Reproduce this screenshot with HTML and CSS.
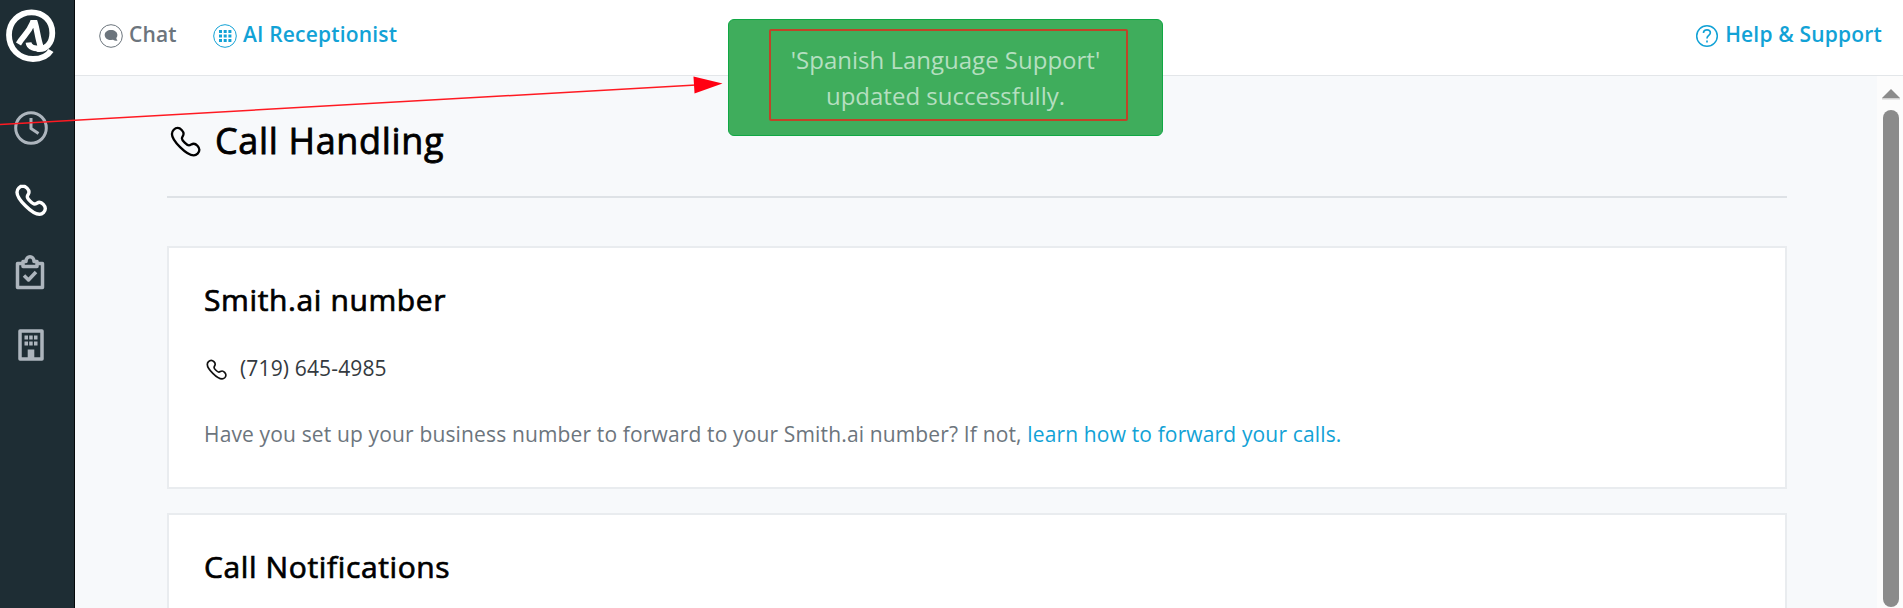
FILE: index.html
```
<!DOCTYPE html>
<html lang="en">
<head>
    <meta charset="utf-8">
    <title>Call Handling</title>
    <link rel="stylesheet" href="styles.css">
</head>
<body>
    <!-- shared phone icon -->
    <svg class="defs" width="0" height="0">
        <symbol id="phone" viewBox="0 0 32 32">
            <path d="M8 2 C5 2 2 5 2 8.200 C2 15 17 30.300 24.500 30.300 C27.500 30.300 30.300 27.500 30.300 24.500 C30.300 22 27 18.300 24.500 18.300 C22.300 18.300 21.500 20 19.500 20 C17.500 20 12.300 14.800 12.300 12.800 C12.300 11 14 10.300 14 8 C14 5.500 10.800 2 8 2 Z" fill="none" stroke="currentColor" stroke-linejoin="round"/>
        </symbol>
    </svg>

    <div class="app">
        <nav class="sidebar">
            <svg class="logo" width="50" height="54" viewBox="0 0 50 54">
                <path d="M31 40 C40 41.500 46.300 34 46.300 24 C46.300 11.500 37 3.300 25.500 3.300 C13 3.300 3 13 3 26 C3 39.500 13 50 27 50 C35 50 41 48 45 41.500" fill="none" stroke="#fff" stroke-width="5.800"/>
                <path d="M12.500 35 C17 27 22 25 26.500 14 H29 C31 20 32 31 35 38.500 C29 40.500 23 38.500 22.500 33.500" fill="none" stroke="#fff" stroke-width="5.800"/>
            </svg>
            <svg class="nav-icon clock" width="36" height="36" viewBox="0 0 36 36">
                <circle cx="18" cy="18" r="15.300"/>
                <path d="M18 8 V18.500 L25.500 23.500"/>
            </svg>
            <svg class="nav-icon phone active" width="32" height="32"><use href="#phone"/></svg>
            <svg class="nav-icon clipboard" width="30" height="36" viewBox="0 0 30 36">
                <path d="M8 9.500 H2.500 V33.500 H27.500 V9.500 H22"/>
                <path d="M8 12.500 V7.500 H11 C11 1 19 1 19 7.500 H22 V12.500 Z"/>
                <path d="M9 21.500 L13.500 26 L21 18"/>
            </svg>
            <svg class="nav-icon building" width="26" height="32" viewBox="0 0 26 32">
                <path d="M2 2 H24 V30 H2 Z"/>
                <path class="solid" d="M6.500 6.500h3.500v4h-3.500z M11.200 6.500h3.500v4h-3.500z M16 6.500h3.500v4h-3.500z M6.500 12.500h3.500v4h-3.500z M11.200 12.500h3.500v4h-3.500z M16 12.500h3.500v4h-3.500z M9.700 20.500h6.600v9.500h-6.600z"/>
            </svg>
        </nav>

        <div class="main">
            <header class="topbar">
                <a class="top-link chat">
                    <svg width="24" height="26" viewBox="0 0 24 26">
                        <circle cx="12" cy="13" r="11.300" fill="none" stroke="currentColor"/>
                        <path d="M12 7 C8.500 7 5.700 9 5.700 12 C5.700 15 8.500 17 12 17 L14 16.800 C15.500 17.800 17 18 18.500 17.500 C17.700 16.800 17.300 16 17.300 15 C18 14.200 18.400 13.200 18.400 12 C18.400 9 15.500 7 12 7 Z" fill="currentColor"/>
                    </svg>
                    <span>Chat</span>
                </a>
                <a class="top-link ai">
                    <svg width="24" height="26" viewBox="0 0 24 26">
                        <circle cx="12" cy="13" r="11.300" fill="none" stroke="currentColor"/>
                        <path d="M6 7h3v3h-3z M10.700 7h3v3h-3z M15.400 7h3v3h-3z M6 11.500h3v3h-3z M10.700 11.500h3v3h-3z M15.400 11.500h3v3h-3z M6 16h3v3h-3z M10.700 16h3v3h-3z M15.400 16h3v3h-3z" fill="currentColor"/>
                    </svg>
                    <span>AI Receptionist</span>
                </a>
                <a class="top-link help">
                    <svg width="24" height="26" viewBox="0 0 24 26" fill="none" stroke="currentColor">
                        <circle cx="12" cy="13" r="10.300" stroke-width="1.500"/>
                        <path d="M8.500 10 C8.500 5.500 15.800 6 15.300 10 C15 12.500 12 12.500 12 15.500 M12 17.500 V19.500" stroke-width="1.700"/>
                    </svg>
                    <span>Help &amp; Support</span>
                </a>
            </header>

            <div class="content">
                <div class="page">
                    <div class="page-title">
                        <svg class="title-icon" width="31" height="31"><use href="#phone"/></svg>
                        <h1>Call Handling</h1>
                    </div>

                    <section class="card number-card">
                        <h2>Smith.ai number</h2>
                        <p class="number">
                            <svg class="number-icon" width="21" height="21"><use href="#phone"/></svg>
                            <span>(719) 645-4985</span>
                        </p>
                        <p class="hint">Have you set up your business number to forward to your Smith.ai number? If not, <a class="link">learn how to forward your calls.</a></p>
                    </section>

                    <section class="card">
                        <h2>Call Notifications</h2>
                    </section>
                </div>

                <div class="scrollbar">
                    <svg width="20" height="12" viewBox="0 0 20 12">
                        <path d="M10 1 L19 10 H1 Z" fill="#8b8b8b"/>
                        <path d="M1 10 H19 V11.500 H1 Z" fill="#d0d0d0"/>
                    </svg>
                    <div class="thumb"></div>
                </div>
            </div>
        </div>
    </div>

    <div class="toast">
        <div class="toast-text">'Spanish Language Support'<br>updated successfully.</div>
    </div>

    <svg class="arrow" width="724" height="140" viewBox="0 0 724 140">
        <path d="M0 124.500 L696 85" stroke="#ff1a22" stroke-width="1.500"/>
        <path d="M693.500 76.500 L722.500 83.500 L694.500 93.500 Z" fill="#ff0012"/>
    </svg>
</body>
</html>
```
FILE: styles.css
```
* {
    box-sizing: border-box;
}

body {
    margin: 0;
    font-family: "Open Sans", sans-serif;
    background-color: #f7f9fb;
    overflow: hidden;
}

h1, h2, p {
    margin: 0;
    white-space: nowrap;
}

svg {
    display: block;
    flex: none;
}

.defs {
    position: absolute;
}

.app {
    display: flex;
    height: 608px;
}

/* sidebar */
.sidebar {
    width: 75px;
    flex: none;
    background-color: #1e2d34;
    border-right: 1px solid #05090b;
}

.logo {
    margin: 9px 0 0 6px;
}

.nav-icon {
    fill: none;
    stroke: #adb5bd;
    stroke-width: 3.5;
    stroke-linejoin: round;
    color: #adb5bd;
}

.clock {
    margin: 47px 0 0 13px;
    stroke-width: 3;
}

.phone {
    margin: 38px 0 0 15px;
    stroke-width: 3.4;
}

.active {
    color: #fff;
}

.clipboard {
    margin: 38px 0 0 15px;
}

.building {
    margin: 39px 0 0 18px;
}

.solid {
    fill: #adb5bd;
    stroke: none;
}

/* top bar */
.main {
    flex: 1;
    display: flex;
    flex-direction: column;
    min-width: 0;
}

.topbar {
    height: 76px;
    flex: none;
    display: flex;
    align-items: flex-start;
    padding: 20px 21px 0 24px;
    background-color: #fff;
    border-bottom: 1px solid #e3e6e9;
}

.top-link {
    display: flex;
    align-items: flex-start;
    color: #12a2d6;
    font-size: 21px;
    font-weight: 600;
    line-height: 28px;
    letter-spacing: 0.17px;
    white-space: nowrap;
}

.top-link svg {
    margin-top: 3px;
}

.top-link span {
    margin-left: 6px;
}

.chat {
    width: 114px;
    color: #6c757d;
}

.help {
    margin-left: auto;
}

/* page */
.content {
    flex: 1;
    display: flex;
    justify-content: space-between;
    min-height: 0;
    overflow: hidden;
}

.page {
    width: 1620px;
    margin-left: 92px;
    flex: none;
}

.page-title {
    display: flex;
    align-items: flex-start;
    height: 122px;
    padding-top: 41px;
    margin-bottom: 48px;
    border-bottom: 2px solid #dee2e6;
}

.title-icon {
    margin: 9px 14px 0 3px;
    stroke-width: 2.4;
}

h1 {
    font-size: 36px;
    line-height: 48px;
    font-weight: 400;
    letter-spacing: 0.65px;
    color: #000;
    -webkit-text-stroke: 0.8px #000;
}

.card {
    height: 243px;
    margin-bottom: 24px;
    padding: 32px 35px 0;
    background-color: #fff;
    border: 2px solid #e9ecef;
}

h2 {
    font-size: 30px;
    line-height: 40px;
    font-weight: 400;
    letter-spacing: 0.62px;
    color: #000;
    -webkit-text-stroke: 0.7px #000;
}

.number {
    display: flex;
    margin-top: 34px;
    font-size: 21px;
    line-height: 28px;
    letter-spacing: 0.15px;
    color: #343a40;
}

.number-icon {
    margin: 5px 13px 0 2px;
    stroke-width: 2.6;
    color: #111;
}

.hint {
    margin-top: 38px;
    font-size: 21px;
    line-height: 28px;
    letter-spacing: 0.145px;
    color: #6c757d;
}

.link {
    color: #12a2d6;
}

/* scrollbar */
.scrollbar {
    width: 26px;
    padding: 12px 0 0 4px;
    background-color: #fcfcfc;
}

.thumb {
    width: 16px;
    height: 497px;
    margin: 10px 0 0 2px;
    border-radius: 8px;
    background-color: #8b8b8b;
}

/* success message over the page */
.toast {
    position: absolute;
    left: 728px;
    top: 19px;
    width: 435px;
    height: 117px;
    padding: 9px 0 0 40px;
    border: 1px solid #10a844;
    border-radius: 6px;
    background-color: #3fad5c;
}

.toast-text {
    width: 359px;
    height: 92px;
    padding: 11px 6px 0 0;
    border: 2px solid #bf4428;
    border-radius: 2px;
    color: #b5dfc0;
    font-size: 24px;
    line-height: 36px;
    text-align: center;
    white-space: nowrap;
}

.arrow {
    position: absolute;
    left: 0;
    top: 0;
}
```
